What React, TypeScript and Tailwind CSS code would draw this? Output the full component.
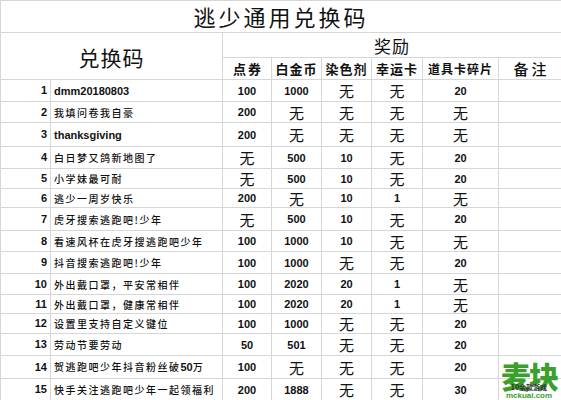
import React from "react";

type Row = {
  no: number;
  code: string;
  points: string;
  platinum: string;
  dye: string;
  luck: string;
  shards: string;
  h: string;
};

const rows: Row[] = [
  { no: 1, code: "dmm20180803", points: "100", platinum: "1000", dye: "无", luck: "无", shards: "20", h: "h-[22px]" },
  { no: 2, code: "我填问卷我自豪", points: "200", platinum: "无", dye: "无", luck: "无", shards: "无", h: "h-[21px]" },
  { no: 3, code: "thanksgiving", points: "200", platinum: "无", dye: "无", luck: "无", shards: "无", h: "h-[24px]" },
  { no: 4, code: "白日梦又鸽新地图了", points: "无", platinum: "500", dye: "10", luck: "无", shards: "20", h: "h-[22px]" },
  { no: 5, code: "小学妹最可耐", points: "无", platinum: "500", dye: "10", luck: "无", shards: "20", h: "h-[20px]" },
  { no: 6, code: "逃少一周岁快乐", points: "200", platinum: "无", dye: "10", luck: "1", shards: "无", h: "h-[19px]" },
  { no: 7, code: "虎牙搜索逃跑吧!少年", points: "无", platinum: "500", dye: "10", luck: "无", shards: "20", h: "h-[23px]" },
  { no: 8, code: "看速风杯在虎牙搜逃跑吧少年", points: "100", platinum: "1000", dye: "10", luck: "无", shards: "无", h: "h-[21px]" },
  { no: 9, code: "抖音搜索逃跑吧!少年", points: "100", platinum: "1000", dye: "无", luck: "无", shards: "20", h: "h-[22px]" },
  { no: 10, code: "外出戴口罩，平安常相伴", points: "100", platinum: "2020", dye: "20", luck: "1", shards: "无", h: "h-[21px]" },
  { no: 11, code: "外出戴口罩，健康常相伴", points: "100", platinum: "2020", dye: "20", luck: "1", shards: "无", h: "h-[19px]" },
  { no: 12, code: "设置里支持自定义键位", points: "100", platinum: "1000", dye: "无", luck: "无", shards: "20", h: "h-[20px]" },
  { no: 13, code: "劳动节要劳动", points: "50", platinum: "501", dye: "无", luck: "无", shards: "20", h: "h-[22px]" },
  { no: 14, code: "贺逃跑吧少年抖音粉丝破50万", points: "100", platinum: "无", dye: "无", luck: "无", shards: "20", h: "h-[23px]" },
  { no: 15, code: "快手关注逃跑吧少年一起领福利", points: "200", platinum: "1888", dye: "无", luck: "无", shards: "30", h: "h-[22px]" },
];

const cjk = "font-['Noto_Sans_CJK_SC',sans-serif]";
const num = "font-['Liberation_Sans',Arial,sans-serif] font-bold";
const cell = "border border-[#d6d6d6] p-0 leading-none align-middle";

function Value({ v }: { v: string }) {
  if (v === "无") {
    return <span className={`${cjk} text-[15px] leading-none`}>无</span>;
  }
  return <span className={`${num} text-[11px] leading-none`}>{v}</span>;
}

function CodeText({ text }: { text: string }) {
  // latin codes are bold arial, chinese ones spaced out
  if (/^[a-z0-9]+$/.test(text)) {
    return <span className={`${num} text-[11px]`}>{text}</span>;
  }
  return (
    <span className={`${cjk} text-[10px] tracking-[1.5px] font-medium`}>
      {text.split(/(\d+)/).map((part, i) =>
        /^\d+$/.test(part) ? (
          <span key={i} className={`${num} text-[11px] tracking-normal`}>
            {part}
          </span>
        ) : (
          <span key={i}>{part}</span>
        )
      )}
    </span>
  );
}

export default function App() {
  return (
    <div className="relative w-[561px] h-[400px] overflow-hidden bg-white text-[#111]">
      <table className="table-fixed border-collapse w-[561px] text-[11px] leading-none">
        <colgroup>
          <col className="w-[50px]" />
          <col className="w-[172px]" />
          <col className="w-[49px]" />
          <col className="w-[50px]" />
          <col className="w-[50px]" />
          <col className="w-[51px]" />
          <col className="w-[76px]" />
          <col className="w-[63px]" />
        </colgroup>
        <tbody>
          <tr className="h-[32px]">
            <td colSpan={8} className={`${cell} text-center ${cjk} text-[22px] tracking-[3px] pb-[1px]`}>
              逃少通用兑换码
            </td>
          </tr>
          <tr className="h-[25px]">
            <td colSpan={2} rowSpan={2} className={`${cell} text-center ${cjk} text-[21px] tracking-[1px] pt-[2px]`}>
              兑换码
            </td>
            <td colSpan={6} className={`${cell} text-center ${cjk} text-[17px] tracking-[1px]`}>
              奖励
            </td>
          </tr>
          <tr className={`h-[22px] ${cjk} font-bold`}>
            <td className={`${cell} text-center text-[13px] tracking-[2px] pl-[2px]`}>点券</td>
            <td className={`${cell} text-center text-[13px] tracking-[1px]`}>白金币</td>
            <td className={`${cell} text-center text-[13px] tracking-[1px]`}>染色剂</td>
            <td className={`${cell} text-center text-[13px] tracking-[1px]`}>幸运卡</td>
            <td className={`${cell} text-center text-[12px] tracking-[1px]`}>道具卡碎片</td>
            <td className={`${cell} text-center text-[15px] tracking-[3px] pl-[3px] font-medium`}>备注</td>
          </tr>
          {rows.map((r) => (
            <tr key={r.no} className={r.h}>
              <td className={`${cell} text-right pr-[3px] ${num} text-[11px]`}>{r.no}</td>
              <td className={`${cell} pl-[3px] whitespace-nowrap overflow-hidden`}>
                <CodeText text={r.code} />
              </td>
              <td className={`${cell} text-center`}><Value v={r.points} /></td>
              <td className={`${cell} text-center`}><Value v={r.platinum} /></td>
              <td className={`${cell} text-center`}><Value v={r.dye} /></td>
              <td className={`${cell} text-center`}><Value v={r.luck} /></td>
              <td className={`${cell} text-center`}><Value v={r.shards} /></td>
              <td className={cell}></td>
            </tr>
          ))}
        </tbody>
      </table>

      {/* watermark logo */}
      <div className="absolute right-0 bottom-0 w-[64px] h-[40px] flex flex-col items-center">
        <span className={`${cjk} font-black text-[30px] leading-none text-[#3aa02b] tracking-[-2px]`}>麦块</span>
        <span className={`${cjk} text-[7px] leading-none text-[#333] -mt-[6px] font-bold`}>10余款游戏</span>
        <span className={`${num} text-[8px] leading-none text-[#3aa02b] mt-[1px]`}>mckuai.com</span>
      </div>
    </div>
  );
}
